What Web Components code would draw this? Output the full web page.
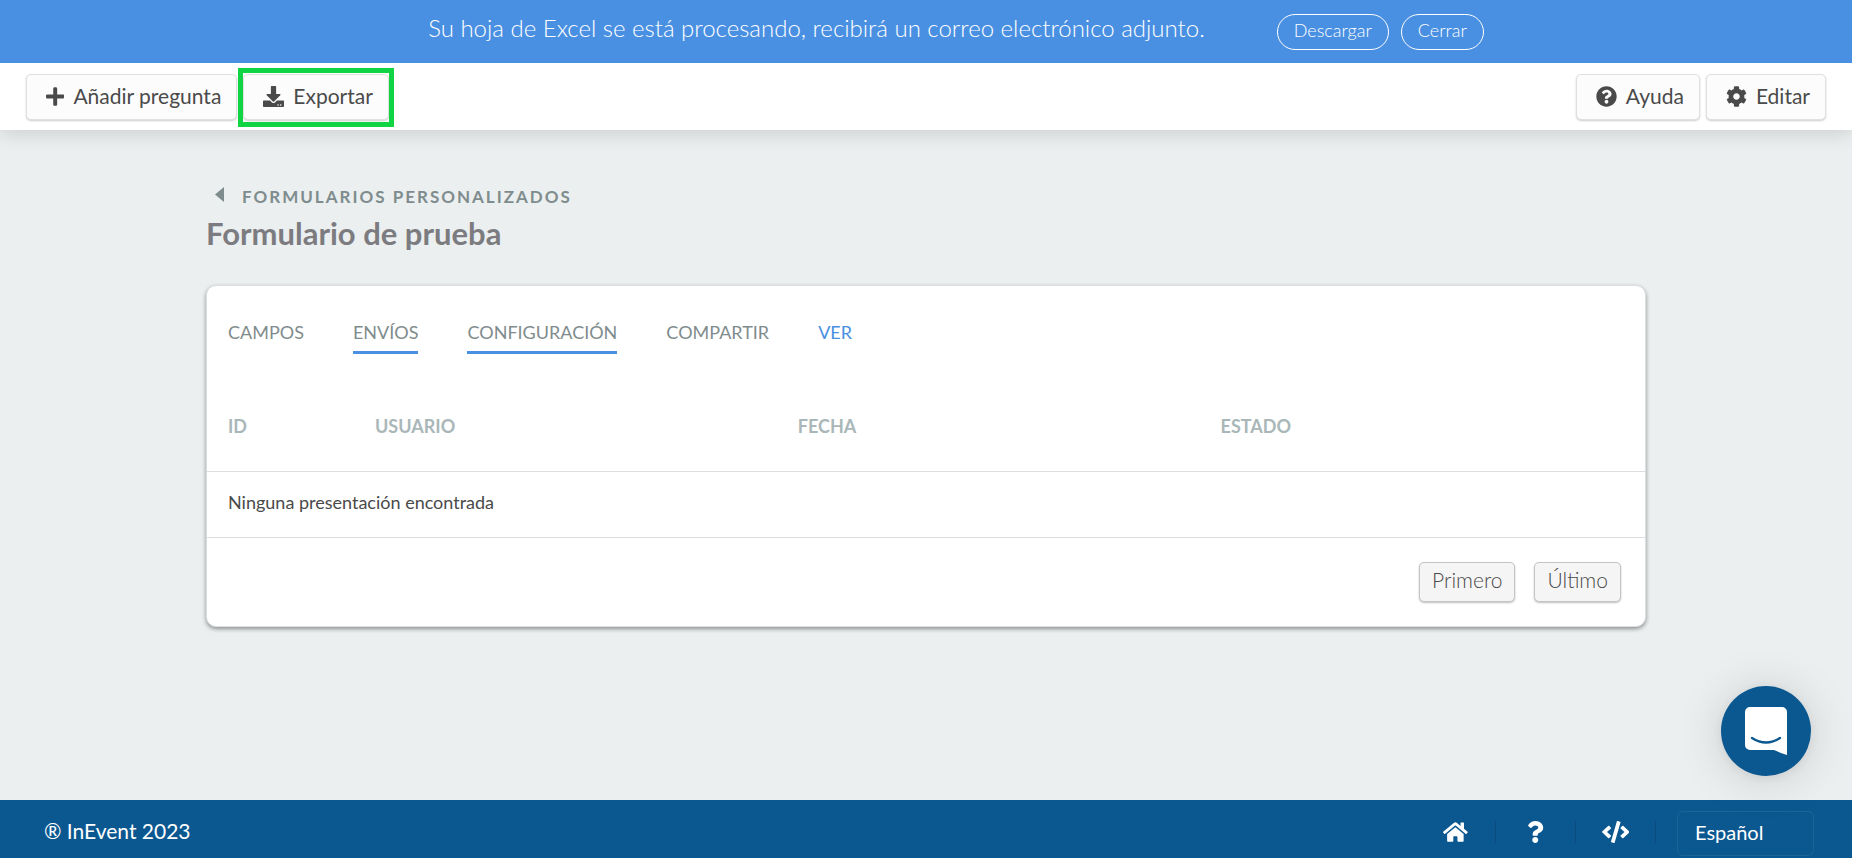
<!DOCTYPE html>
<html lang="es">
<head>
<meta charset="utf-8">
<title>Formulario de prueba</title>
<style>
html, body { height: 100%; }
body { margin: 0; background: #ebeff0; font-family: Lato, "Liberation Sans", sans-serif; color: #4a4a4a; }
</style>
</head>
<body>
<form-page></form-page>
<script>
const define = (name, html, setup) => {
  const tpl = document.createElement('template');
  tpl.innerHTML = html;
  customElements.define(name, class extends HTMLElement {
    constructor() {
      super();
      this.attachShadow({ mode: 'open' }).append(tpl.content.cloneNode(true));
    }
    connectedCallback() { if (setup) setup(this, this.shadowRoot); }
  });
};

const icons = {
  plus: ['0 0 448 512', 'M416 208H272V64c0-17.67-14.33-32-32-32h-32c-17.67 0-32 14.33-32 32v144H32c-17.67 0-32 14.33-32 32v32c0 17.67 14.33 32 32 32h144v144c0 17.67 14.33 32 32 32h32c17.67 0 32-14.33 32-32V304h144c17.67 0 32-14.33 32-32v-32c0-17.67-14.33-32-32-32z'],
  download: ['0 0 512 512', 'M216 0h80c13.300 0 24 10.700 24 24v168h87.700c17.800 0 26.700 21.500 14.100 34.100L269.700 378.300c-7.500 7.500-19.800 7.500-27.300 0L90.100 226.100c-12.600-12.600-3.700-34.100 14.100-34.100H192V24c0-13.300 10.700-24 24-24zm296 376v112c0 13.300-10.700 24-24 24H24c-13.300 0-24-10.700-24-24V376c0-13.300 10.700-24 24-24h146.700l49 49c20.100 20.100 52.500 20.100 72.600 0l49-49H488c13.300 0 24 10.700 24 24zm-124 88c0-11-9-20-20-20s-20 9-20 20 9 20 20 20 20-9 20-20zm64 0c0-11-9-20-20-20s-20 9-20 20 9 20 20 20 20-9 20-20z'],
  help: ['0 0 512 512', 'M504 256c0 136.997-111.043 248-248 248S8 392.997 8 256C8 119.083 119.043 8 256 8s248 111.083 248 248zM262.655 90c-54.497 0-89.255 22.957-116.549 63.758-3.536 5.286-2.353 12.415 2.715 16.258l34.699 26.310c5.205 3.947 12.621 3.008 16.665-2.122 17.864-22.658 30.113-35.797 57.303-35.797 20.429 0 45.698 13.148 45.698 32.958 0 14.976-12.363 22.667-32.534 33.976C247.128 238.528 216 254.941 216 296v4c0 6.627 5.373 12 12 12h56c6.627 0 12-5.373 12-12v-1.333c0-28.462 83.186-29.647 83.186-106.667 0-58.002-60.165-102-116.531-102zM256 338c-25.365 0-46 20.635-46 46 0 25.364 20.635 46 46 46s46-20.636 46-46c0-25.365-20.635-46-46-46z'],
  gear: ['0 0 512 512', 'M487.400 315.700l-42.600-24.600c4.300-23.200 4.300-47 0-70.200l42.600-24.600c4.900-2.800 7.100-8.600 5.500-14-11.100-35.600-30-67.800-54.700-94.600-3.800-4.100-10-5.100-14.800-2.300L380.800 110c-17.900-15.400-38.500-27.300-60.800-35.100V25.800c0-5.600-3.900-10.500-9.400-11.700-36.700-8.200-74.300-7.800-109.200 0-5.500 1.200-9.400 6.100-9.400 11.700V75c-22.200 7.900-42.800 19.800-60.800 35.100L88.700 85.500c-4.900-2.800-11-1.900-14.800 2.300-24.700 26.700-43.600 58.900-54.700 94.600-1.700 5.400.6 11.200 5.500 14L67.300 221c-4.300 23.200-4.300 47 0 70.200l-42.600 24.600c-4.900 2.800-7.100 8.600-5.500 14 11.100 35.600 30 67.800 54.700 94.600 3.800 4.100 10 5.100 14.800 2.300l42.600-24.600c17.900 15.400 38.500 27.300 60.800 35.100v49.200c0 5.600 3.900 10.500 9.400 11.700 36.700 8.200 74.300 7.800 109.200 0 5.500-1.200 9.400-6.100 9.400-11.700v-49.200c22.200-7.900 42.800-19.800 60.800-35.100l42.600 24.600c4.900 2.800 11 1.900 14.800-2.300 24.700-26.700 43.600-58.900 54.700-94.600 1.500-5.500-.7-11.300-5.600-14.100zM256 336c-44.100 0-80-35.900-80-80s35.900-80 80-80 80 35.900 80 80-35.900 80-80 80z'],
  home: ['0 0 576 512', 'M280 149L96 301v164a16 16 0 0 0 16 16h112a16 16 0 0 0 16-16v-97a16 16 0 0 1 16-16h64a16 16 0 0 1 16 16v97a16 16 0 0 0 16 16h112a16 16 0 0 0 16-16V301L296 149a13 13 0 0 0-16 0zM572 252l-84-69V45a12 12 0 0 0-12-12h-56a12 12 0 0 0-12 12v72l-89-74a48 48 0 0 0-61 0L4 252a12 12 0 0 0-1 16l25 31a12 12 0 0 0 17 2L280 107a13 13 0 0 1 16 0l235 194a12 12 0 0 0 17-2l25-31a12 12 0 0 0-1-16z'],
  question: ['0 0 384 512', 'M202.021 0C122.202 0 70.503 32.703 29.914 91.026c-7.363 10.580-5.093 25.086 5.178 32.874l43.138 32.709c10.373 7.865 25.132 6.026 33.253-4.148 25.049-31.381 43.630-49.449 82.757-49.449 30.764 0 68.816 19.799 68.816 49.631 0 22.552-18.617 34.134-48.993 51.164-35.423 19.860-82.299 44.576-82.299 106.405V320c0 13.255 10.745 24 24 24h72.471c13.255 0 24-10.745 24-24v-5.773c0-42.860 125.268-44.645 125.268-160.627C377.504 66.256 286.902 0 202.021 0zM192 373.459c-38.196 0-69.271 31.075-69.271 69.271 0 38.195 31.075 69.270 69.271 69.270s69.271-31.075 69.271-69.271-31.075-69.270-69.271-69.270z'],
  code: ['0 0 640 512', 'M278.900 511.500l-61-17.700c-6.400-1.800-10-8.500-8.200-14.900L346.200 8.700c1.800-6.400 8.500-10 14.900-8.200l61 17.700c6.400 1.800 10 8.500 8.200 14.900L293.800 503.300c-1.900 6.400-8.500 10.100-14.900 8.200zm-114-112.200l43.500-46.400c4.600-4.900 4.300-12.700-.8-17.200L117 256l90.600-79.700c5.100-4.500 5.500-12.300.8-17.200l-43.500-46.400c-4.500-4.800-12.100-5.100-17-.5L3.800 247.200c-5.100 4.700-5.100 12.800 0 17.500l144.100 135.100c4.900 4.600 12.500 4.400 17-.5zm327.200.6l144.100-135.100c5.100-4.700 5.100-12.800 0-17.500L492.100 112.100c-4.800-4.500-12.400-4.300-17 .5L431.600 159c-4.600 4.900-4.300 12.700.8 17.200L523 256l-90.600 79.700c-5.100 4.500-5.500 12.300-.8 17.200l43.500 46.400c4.500 4.900 12.100 5.100 17 .6z']
};
define('ui-icon', `<style>
:host { display: inline-flex; flex: none; height: 21px; }
svg { display: block; height: 100%; fill: currentColor; }
</style><svg aria-hidden="true"><path/></svg>`, (el, root) => {
  const [box, d] = icons[el.getAttribute('name')];
  root.querySelector('svg').setAttribute('viewBox', box);
  root.querySelector('path').setAttribute('d', d);
});

define('notice-bar', `<style>
:host { display: flex; justify-content: center; align-items: center; box-sizing: border-box; height: 63px; padding-left: 60px; background: #4a90e2; color: #fff; position: relative; z-index: 1; }
p { margin: 0 72px 0 0; padding-bottom: 8px; font-size: 24px; font-weight: 300; line-height: 30px; }
div { display: flex; gap: 12px; }
button { box-sizing: border-box; height: 36px; padding: 0 16px 3px; border: 1px solid #fff; border-radius: 18px; background: none; color: #fff; font: 300 18px/30px Lato, sans-serif; }
</style><p>Su hoja de Excel se está procesando, recibirá un correo electrónico adjunto.</p>
<div><button>Descargar</button><button>Cerrar</button></div>`);

define('tool-button', `<style>
:host { display: block; }
button { display: flex; align-items: center; gap: 9px; box-sizing: border-box; height: 46px; padding: 0 15px 2px 19px; border: 1px solid #dfe0e1; border-radius: 5px; background: #fcfcfc; box-shadow: 0 1px 2px rgba(0,0,0,.2); color: #4a4a4a; font: 400 21px/30px Lato, sans-serif; }
:host([marked]) { margin: -1px 0 -2px; padding: 1px 0 2px; outline: 5px solid #11d445; }
</style><button><slot name="icon"></slot><slot></slot></button>`);

define('tool-bar', `<style>
:host { display: flex; justify-content: space-between; align-items: flex-start; box-sizing: border-box; height: 67px; padding: 11px 26px; background: #fff; box-shadow: 0 2px 20px rgba(0,0,0,.16); position: relative; }
div { display: flex; align-items: flex-start; gap: 6px; }
</style><div><slot name="start"></slot></div><div><slot name="end"></slot></div>`);

define('page-heading', `<style>
:host { display: block; }
a { display: flex; align-items: center; gap: 18px; padding-left: 9px; color: #7f8c8d; font-size: 17px; font-weight: 700; line-height: 24px; letter-spacing: 2px; text-transform: uppercase; text-decoration: none; }
svg { width: 9px; height: 15px; fill: currentColor; padding-bottom: 6px; }
h1 { margin: 5px 0 0; color: #7c7c80; font-size: 31px; font-weight: 700; line-height: 38px; }
</style><a href="#"><svg viewBox="0 0 9 15" aria-hidden="true"><path d="M9 0v15L0 7.500z"/></svg>Formularios personalizados</a><h1><slot></slot></h1>`);

define('tab-bar', `<style>
:host { display: flex; gap: 49px; padding: 34px 21px 0; }
a { padding-bottom: 7px; border-bottom: 3px solid transparent; color: #7f8c8d; font-size: 18px; line-height: 24px; text-decoration: none; }
a.on { border-color: #4a90e2; }
a.link { color: #4a90e2; }
</style><a href="#">CAMPOS</a><a href="#" class="on">ENVÍOS</a><a href="#" class="on">CONFIGURACIÓN</a><a href="#">COMPARTIR</a><a href="#" class="link">VER</a>`);

define('entry-table', `<style>
:host { display: block; margin-top: 28px; }
table { width: 100%; border-collapse: collapse; table-layout: fixed; }
th, td { box-sizing: border-box; padding: 0 21px; text-align: left; border-bottom: 1px solid #dcdfe0; font-size: 18px; line-height: 24px; }
th { height: 89px; color: #aab7b8; font-weight: 700; }
td { height: 66px; padding-bottom: 4px; color: #4a4a4a; }
th:nth-child(1) { width: 147px; }
th:nth-child(2), th:nth-child(3) { width: 29.4%; }
</style><table><thead><tr><th>ID</th><th>USUARIO</th><th>FECHA</th><th>ESTADO</th></tr></thead>
<tbody><tr><td colspan="4">Ninguna presentación encontrada</td></tr></tbody></table>`);

define('page-nav', `<style>
:host { display: flex; justify-content: flex-end; gap: 19px; padding: 24px; }
button { box-sizing: border-box; height: 40px; padding: 0 12px 4px; border: 1px solid #c4c4c4; border-radius: 5px; background: #f5f5f5; box-shadow: 0 1px 2px rgba(0,0,0,.25); color: #4a4a4a; font: 300 21px/30px Lato, sans-serif; }
</style><button>Primero</button><button>Último</button>`);

define('content-card', `<style>
:host { display: block; border: 1px solid #dcdfe0; border-radius: 10px; background: #fff; box-shadow: 0 2px 4px rgba(0,0,0,.4); }
</style><slot></slot>`);

define('page-footer', `<style>
:host { display: flex; align-items: center; justify-content: space-between; box-sizing: border-box; height: 58px; padding: 0 38px 0 44px; background: #0b5891; color: #fff; line-height: 30px; }
nav { display: flex; align-items: center; }
a { display: flex; justify-content: center; align-items: center; width: 79px; height: 22px; margin-top: 6px; border-right: 1px solid #0a4b7c; color: #fff; }
ui-icon { height: 22px; }
small { font-size: 21px; padding-top: 4px; }
select { appearance: none; box-sizing: border-box; width: 137px; height: 45px; margin: 9px 0 0 21px; padding: 0 17px 4px; border: 1px solid #1c6397; border-radius: 6px; background: none; color: #fff; font: 400 20px/30px Lato, sans-serif; }
</style><small>® InEvent 2023</small>
<nav><a href="#" aria-label="Inicio"><ui-icon name="home"></ui-icon></a><a href="#" aria-label="Ayuda"><ui-icon name="question"></ui-icon></a><a href="#" aria-label="Código"><ui-icon name="code"></ui-icon></a>
<select aria-label="Idioma"><option>Español</option></select></nav>`);

define('chat-launcher', `<style>
:host { position: fixed; right: 41px; bottom: 82px; }
button { display: flex; align-items: center; justify-content: center; width: 90px; height: 90px; padding: 0; border: 0; border-radius: 50%; background: #0b5891; box-shadow: 0 2px 12px rgba(0,0,0,.08), 0 3px 48px rgba(0,0,0,.14); }
svg { width: 42px; height: 48px; }
</style><button aria-label="Chat"><svg viewBox="0 0 42 48" aria-hidden="true"><path fill="#fff" d="M5 0h32a5 5 0 0 1 5 5v43c-4-1-8-3-13-5H5a5 5 0 0 1-5-5V5a5 5 0 0 1 5-5z"/><path d="M7 31q14 9 28 0" fill="none" stroke="#0b5891" stroke-width="2.400" stroke-linecap="round"/></svg></button>`);

define('form-page', `<style>
:host { display: flex; flex-direction: column; min-height: 100vh; }
main { flex: 1; box-sizing: border-box; width: 100%; max-width: 1440px; margin: 0 auto; padding-top: 55px; }
content-card { margin-top: 33px; }
</style><notice-bar></notice-bar>
<tool-bar><tool-button slot="start"><ui-icon slot="icon" name="plus"></ui-icon>Añadir pregunta</tool-button><tool-button slot="start" marked><ui-icon slot="icon" name="download"></ui-icon>Exportar</tool-button><tool-button slot="end"><ui-icon slot="icon" name="help"></ui-icon>Ayuda</tool-button><tool-button slot="end"><ui-icon slot="icon" name="gear"></ui-icon>Editar</tool-button></tool-bar>
<main><page-heading>Formulario de prueba</page-heading><content-card><tab-bar></tab-bar><entry-table></entry-table><page-nav></page-nav></content-card></main>
<page-footer></page-footer><chat-launcher></chat-launcher>`);
</script>
</body>
</html>
